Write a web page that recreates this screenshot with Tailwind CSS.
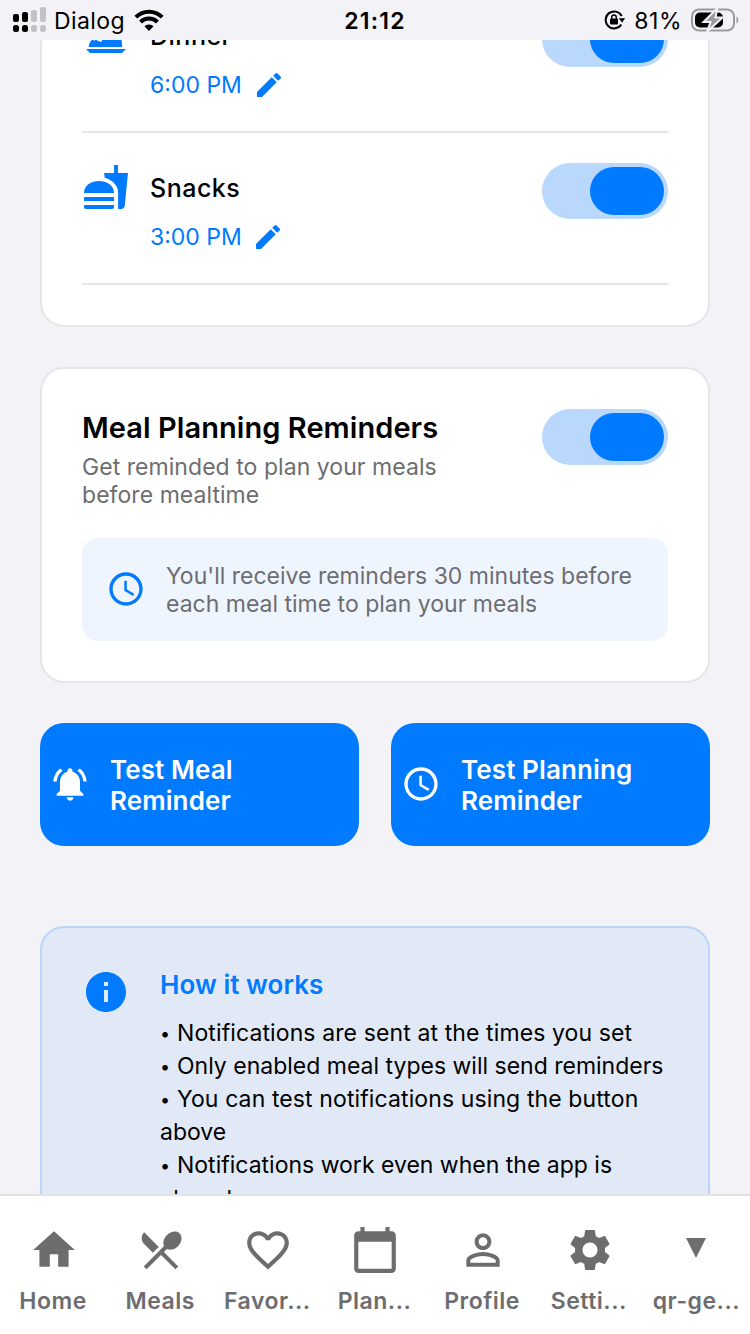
<!DOCTYPE html>
<html lang="en">
<head>
<meta charset="utf-8">
<title>Meal Reminders</title>
<script src="https://cdn.jsdelivr.net/npm/@tailwindcss/browser@4"></script>
</head>
<body class="w-[750px] h-[1334px] overflow-hidden bg-[#f2f2f7] font-['Inter','Liberation_Sans',sans-serif] text-black">
<div class="flex h-[1334px] w-[750px] flex-col overflow-hidden">
  <!-- Status bar -->
  <header class="flex h-[40px] shrink-0 items-center bg-[#f2f2f7]">
    <div class="flex w-1/3 items-center pl-[13px]">
      <svg class="h-[26px] w-[34px]" viewBox="0 0 34 26">
        <g fill="#000"><rect x="0" y="7" width="6" height="8" rx="2"/><rect x="0" y="18" width="6" height="7" rx="2.5"/><rect x="9" y="5" width="6" height="10" rx="2"/><rect x="9" y="18" width="6" height="7" rx="2.5"/></g>
        <g fill="#c2c2c5"><rect x="18" y="3" width="6" height="12" rx="2"/><rect x="18" y="18" width="6" height="7" rx="2.5"/><rect x="27" y="0" width="6" height="15" rx="2"/><rect x="27" y="18" width="6" height="7" rx="2.5"/></g>
      </svg>
      <span class="ml-[7px] pt-px text-[23px] leading-[28px] tracking-[0.4px]">Dialog</span>
      <svg class="ml-[9px] h-[22px] w-[30px]" viewBox="0 0 30 22" fill="none" stroke="#000" stroke-width="4"><path d="M1.8 8.2a18.6 18.6 0 0 1 26.4 0"/><path d="M6.5 13a12 12 0 0 1 17 0"/><path d="M15 22l-4.6-4.7a6.5 6.5 0 0 1 9.200 0z" fill="#000" stroke="none"/></svg>
    </div>
    <div class="w-1/3 pt-[2px] text-center text-[23px] font-semibold leading-[28px] tracking-[1.2px]">21:12</div>
    <div class="flex w-1/3 items-center justify-end pr-[11px]">
      <svg class="h-[20px] w-[22px]" viewBox="0 0 22 20"><path d="M17.300 14.500a8.500 8.500 0 1 1 .4-8.500" fill="none" stroke="#000" stroke-width="2"/><path d="M14.800 8.300h6.400l-3.200 4.200z"/><rect x="6" y="8.500" width="8" height="6" rx="1"/><path d="M7.700 9V7.300a2.300 2.300 0 0 1 4.600 0V9" fill="none" stroke="#000" stroke-width="1.400"/></svg>
      <span class="ml-[8px] pt-px text-[23px] leading-[28px] tracking-[0.5px]">81%</span>
      <svg class="ml-[9px] h-[24px] w-[48px]" viewBox="0 0 48 24"><rect x="1" y="1.500" width="42" height="21" rx="7" fill="none" stroke="#9b9b9f" stroke-width="2"/><path d="M45.500 8.500c2.300.8 2.300 6.200 0 7z" fill="#9b9b9f"/><path d="M9 4.500h18a5 5 0 0 1 5 5v5a5 5 0 0 1-5 5H9a5 5 0 0 1-5-5v-5a5 5 0 0 1 5-5z"/><path d="M26.500 0L12.500 14h7L16 24 31.500 9.500h-7z" fill="#9b9b9f" stroke="#f2f2f7" stroke-width="2"/></svg>
    </div>
  </header>

  <main class="flex min-h-0 flex-1 flex-col overflow-hidden px-[40px]">
    <!-- Meal types -->
    <section class="-mt-[61px] flex shrink-0 flex-col rounded-[24px] border-2 border-[#e5e5ea] bg-white px-[40px] pb-[40px]">
      <div class="flex h-[152px] items-start border-b-2 border-[#e5e5ea] pt-[30px]">
        <svg class="h-[48px] w-[48px] shrink-0 fill-[#007aff]" viewBox="0 0 24 24"><path d="M2 19h20l-2 2H4z"/><path d="M3.300 18c.2-1.500.8-2.600 1.500-3.400V8h1v6.900l.7-.1V8h1v6.700c.6.100 1.100.4 1.600.8l.9-.4V8h8c1.100 1.600 1.900 5.500 2.100 10z"/></svg>
        <div class="ml-[20px] flex flex-1 flex-col">
          <span class="mt-[8px] text-[25px] font-medium leading-[34px] tracking-[0.5px]">Dinner</span>
          <div class="mt-[16px] flex items-center text-[#007aff]"><span class="text-[23px] leading-[32px]">6:00 PM</span>
            <svg class="ml-[11px] h-[32px] w-[32px] fill-current" viewBox="0 0 24 24"><path d="M3 17.25V21h3.750L17.810 9.940l-3.750-3.750L3 17.250zM20.710 7.040c.39-.39.39-1.020 0-1.410l-2.340-2.340c-.39-.39-1.020-.39-1.410 0l-1.830 1.830 3.750 3.750 1.830-1.830z"/></svg></div>
        </div>
        <div class="flex h-[56px] w-[126px] shrink-0 justify-end rounded-[28px] bg-[#b9d8fc] p-[4px]"><div class="h-[48px] w-[74px] rounded-[24px] bg-[#007aff]"></div></div>
      </div>
      <div class="flex h-[152px] items-start border-b-2 border-[#e5e5ea] pt-[30px]">
        <svg class="h-[48px] w-[48px] shrink-0 fill-[#007aff]" viewBox="0 0 24 24"><path d="M18.060 22.990h1.660c.84 0 1.530-.64 1.630-1.460L23 5.050h-5V1h-1.970v4.050h-4.970l.3 2.340c1.710.47 3.310 1.320 4.270 2.260 1.440 1.420 2.430 2.890 2.430 5.290v8.050zM1 21.990V21h15.030v.99c0 .55-.45 1-1.010 1H2.010c-.56 0-1.010-.45-1.010-1zm15.030-7c0-8-15.030-8-15.030 0h15.030zM1.020 17h15v2h-15z"/></svg>
        <div class="ml-[20px] flex flex-1 flex-col">
          <span class="mt-[8px] text-[25px] font-medium leading-[34px] tracking-[0.5px]">Snacks</span>
          <div class="mt-[16px] flex items-center text-[#007aff]"><span class="text-[23px] leading-[32px]">3:00 PM</span>
            <svg class="ml-[10px] h-[32px] w-[32px] fill-current" viewBox="0 0 24 24"><path d="M3 17.25V21h3.750L17.810 9.940l-3.750-3.750L3 17.250zM20.710 7.040c.39-.39.39-1.020 0-1.410l-2.340-2.340c-.39-.39-1.020-.39-1.410 0l-1.830 1.830 3.750 3.750 1.830-1.830z"/></svg></div>
        </div>
        <div class="flex h-[56px] w-[126px] shrink-0 justify-end rounded-[28px] bg-[#b9d8fc] p-[4px]"><div class="h-[48px] w-[74px] rounded-[24px] bg-[#007aff]"></div></div>
      </div>
    </section>

    <!-- Planning reminders -->
    <section class="mt-[40px] flex h-[316px] shrink-0 flex-col rounded-[24px] border-2 border-[#e5e5ea] bg-white p-[40px]">
      <div class="flex items-start justify-between">
        <div>
          <h2 class="pt-px text-[29px] font-semibold leading-[36px] tracking-[0.06px]">Meal Planning Reminders</h2>
          <p class="mt-[7px] text-[23px] leading-[28px] tracking-[0.05px] text-[#6d6d70]">Get reminded to plan your meals<br>before mealtime</p>
        </div>
        <div class="flex h-[56px] w-[126px] shrink-0 justify-end rounded-[28px] bg-[#b9d8fc] p-[4px]"><div class="h-[48px] w-[74px] rounded-[24px] bg-[#007aff]"></div></div>
      </div>
      <div class="mt-[29px] flex h-[103px] items-center rounded-[16px] bg-[#eff5ff] pl-[24px]">
        <svg class="mb-px h-[40px] w-[40px] shrink-0 fill-[#007aff]" viewBox="0 0 24 24"><path d="M11.990 2C6.470 2 2 6.480 2 12s4.470 10 9.990 10C17.520 22 22 17.520 22 12S17.520 2 11.990 2zM12 20c-4.420 0-8-3.580-8-8s3.580-8 8-8 8 3.580 8 8-3.580 8-8 8zm.5-13H11v6l5.250 3.150.75-1.230-4.500-2.670z"/></svg>
        <p class="ml-[20px] text-[23px] leading-[28px] text-[#6d6d70]">You'll receive reminders 30 minutes before<br>each meal time to plan your meals</p>
      </div>
    </section>

    <div class="mt-[40px] grid h-[123px] shrink-0 grid-cols-2 gap-[32px] text-white">
      <button class="flex items-center rounded-[24px] bg-[#007aff] pl-[10px] text-left">
        <svg class="mb-px h-[40px] w-[40px] shrink-0 fill-current" viewBox="0 0 24 24"><path d="M7.580 4.080L6.150 2.650C3.750 4.480 2.170 7.300 2.030 10.500h2c.15-2.650 1.510-4.970 3.550-6.420zm12.390 6.420h2c-.15-3.200-1.730-6.020-4.120-7.850l-1.420 1.430c2.020 1.450 3.390 3.770 3.540 6.420zM18 11c0-3.070-1.640-5.640-4.500-6.320V4c0-.83-.67-1.500-1.500-1.500s-1.500.67-1.500 1.500v.68C7.630 5.360 6 7.920 6 11v5l-2 2v1h16v-1l-2-2v-5zm-6 11c.14 0 .27-.01.4-.04.65-.14 1.180-.58 1.440-1.180.1-.24.15-.5.15-.78h-4c.01 1.100.9 2 2.010 2z"/></svg>
        <span class="ml-[20px] text-[26px] font-semibold leading-[31px] tracking-[0.1px]">Test Meal<br>Reminder</span>
      </button>
      <button class="flex items-center rounded-[24px] bg-[#007aff] pl-[10px] text-left">
        <svg class="mb-px h-[40px] w-[40px] shrink-0 fill-current" viewBox="0 0 24 24"><path d="M11.990 2C6.470 2 2 6.480 2 12s4.470 10 9.990 10C17.520 22 22 17.520 22 12S17.520 2 11.990 2zM12 20c-4.420 0-8-3.580-8-8s3.580-8 8-8 8 3.580 8 8-3.580 8-8 8zm.5-13H11v6l5.250 3.150.75-1.230-4.500-2.670z"/></svg>
        <span class="ml-[20px] text-[26px] font-semibold leading-[31px] tracking-[0.12px]">Test Planning<br>Reminder</span>
      </button>
    </div>

    <!-- How it works -->
    <section class="mt-[80px] flex h-[310px] shrink-0 items-start rounded-[24px] border-2 border-[#b9d5f9] bg-[#e1e9f6] p-[40px]">
      <svg class="h-[48px] w-[48px] shrink-0 fill-[#007aff]" viewBox="0 0 24 24"><path d="M12 2C6.480 2 2 6.480 2 12s4.480 10 10 10 10-4.480 10-10S17.520 2 12 2zm1 15h-2v-6h2v6zm0-8h-2V7h2v2z"/></svg>
      <div class="ml-[30px] whitespace-nowrap">
        <h3 class="text-[26px] font-semibold leading-[34px] tracking-[0.05px] text-[#007aff]">How it works</h3>
        <div class="mt-[15px] text-[23px] leading-[33px]">
          <p class="flex h-[33px] tracking-[0.11px]"><span class="w-[17px] text-[18px]">•</span>Notifications are sent at the times you set</p>
          <p class="flex h-[33px]"><span class="w-[17px] text-[18px]">•</span>Only enabled meal types will send reminders</p>
          <p class="flex h-[33px] tracking-[0.11px]"><span class="w-[17px] text-[18px]">•</span>You can test notifications using the button</p>
          <p class="h-[33px]">above</p>
          <p class="flex h-[33px]"><span class="w-[17px] text-[18px]">•</span>Notifications work even when the app is</p>
          <p class="h-[33px] pt-px">closed</p>
        </div>
      </div>
    </section>
  </main>

  <!-- Tab bar -->
  <nav class="grid h-[140px] shrink-0 grid-cols-7 border-t-2 border-[#e3e3e8] bg-white pt-[29px] text-[23px] font-semibold leading-[32px] tracking-[0.5px] text-[#6d6d70]">
    <div class="flex flex-col items-center"><svg class="h-[50px] w-[50px] fill-current" viewBox="0 0 24 24"><path d="M10 20v-6h4v6h5v-8h3L12 3 2 12h3v8z"/></svg><span class="mt-[10px] mr-px">Home</span></div>
    <div class="flex flex-col items-center"><svg class="h-[50px] w-[50px] fill-current" viewBox="0 0 24 24"><path d="M8.100 13.340l2.830-2.830L3.910 3.500c-1.560 1.560-1.560 4.090 0 5.660l4.190 4.180zm6.780-1.810c1.530.71 3.680.21 5.270-1.380 1.910-1.910 2.280-4.650.81-6.120-1.460-1.460-4.200-1.100-6.120.81-1.590 1.590-2.090 3.740-1.380 5.270L3.700 19.870l1.410 1.410L12 14.410l6.880 6.880 1.410-1.410L13.410 13l1.470-1.470z"/></svg><span class="mt-[10px] mr-px">Meals</span></div>
    <div class="flex flex-col items-center"><svg class="h-[50px] w-[50px] fill-current" viewBox="0 0 24 24"><path d="M16.500 3c-1.740 0-3.410.81-4.500 2.090C10.910 3.810 9.240 3 7.500 3 4.420 3 2 5.420 2 8.500c0 3.780 3.400 6.860 8.550 11.540L12 21.350l1.450-1.320C18.600 15.360 22 12.280 22 8.500 22 5.420 19.580 3 16.500 3zm-4.400 15.550l-.1.1-.1-.1C7.140 14.240 4 11.390 4 8.500 4 6.500 5.500 5 7.500 5c1.540 0 3.040.99 3.570 2.360h1.870C13.460 5.990 14.960 5 16.500 5c2 0 3.500 1.500 3.500 3.500 0 2.890-3.140 5.740-7.900 10.050z"/></svg><span class="mt-[10px] mr-px">Favor...</span></div>
    <div class="flex flex-col items-center"><svg class="h-[50px] w-[50px] fill-current" viewBox="0 0 24 24"><path d="M20 3h-1V1h-2v2H7V1H5v2H4c-1.100 0-2 .9-2 2v16c0 1.100.9 2 2 2h16c1.100 0 2-.9 2-2V5c0-1.100-.9-2-2-2zm0 18H4V8h16v13z"/></svg><span class="mt-[10px] mr-px">Plan...</span></div>
    <div class="flex flex-col items-center"><svg class="ml-px h-[50px] w-[50px] fill-current" viewBox="0 0 24 24"><path d="M12 5.900c1.160 0 2.100.94 2.100 2.100s-.94 2.100-2.100 2.100S9.900 9.160 9.900 8s.94-2.100 2.100-2.100m0 9c2.970 0 6.100 1.460 6.100 2.100v1.100H5.900V17c0-.64 3.130-2.100 6.100-2.100M12 4C9.790 4 8 5.790 8 8s1.790 4 4 4 4-1.790 4-4-1.790-4-4-4zm0 9c-2.670 0-8 1.340-8 4v3h16v-3c0-2.660-5.330-4-8-4z"/></svg><span class="mt-[10px]">Profile</span></div>
    <div class="flex flex-col items-center"><svg class="ml-px h-[50px] w-[50px] fill-current" viewBox="0 0 24 24"><path d="M19.140 12.940c.04-.3.06-.61.06-.94 0-.32-.02-.64-.07-.94l2.030-1.580c.18-.14.23-.41.12-.61l-1.920-3.320c-.12-.22-.37-.29-.59-.22l-2.390.96c-.5-.38-1.030-.7-1.620-.94l-.36-2.540c-.04-.24-.24-.41-.48-.41h-3.840c-.24 0-.43.17-.47.41l-.36 2.540c-.59.24-1.130.57-1.620.94l-2.390-.96c-.22-.08-.47 0-.59.22L2.740 8.870c-.12.21-.08.47.12.61l2.030 1.580c-.05.3-.09.63-.09.94s.02.64.07.94l-2.030 1.580c-.18.14-.23.41-.12.61l1.920 3.320c.12.22.37.29.59.22l2.390-.96c.5.38 1.030.7 1.620.94l.36 2.540c.05.24.24.41.48.41h3.840c.24 0 .44-.17.47-.41l.36-2.540c.59-.24 1.130-.56 1.620-.94l2.390.96c.22.08.47 0 .59-.22l1.920-3.320c.12-.22.07-.47-.12-.61l-2.010-1.580zM12 15.600c-1.980 0-3.600-1.620-3.600-3.600s1.620-3.600 3.600-3.600 3.600 1.620 3.600 3.600-1.620 3.600-3.600 3.600z"/></svg><span class="mt-[10px] mr-px">Setti...</span></div>
    <div class="flex flex-col items-center"><svg class="h-[50px] w-[50px] fill-current" viewBox="0 0 50 50"><path d="M15 13h20L25 33z"/></svg><span class="mt-[10px]">qr-ge...</span></div>
  </nav>
</div>
</body>
</html>
